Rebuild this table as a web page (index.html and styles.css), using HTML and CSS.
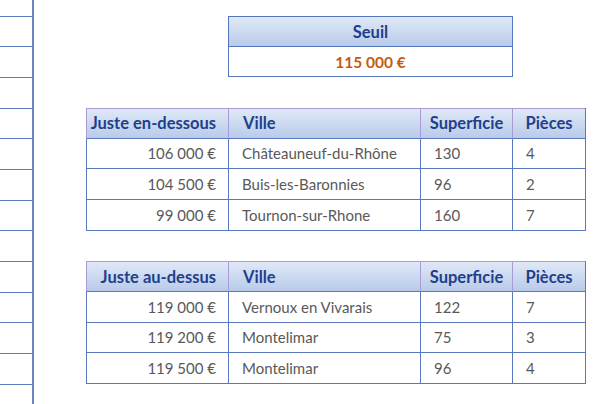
FILE: index.html
```html
<!DOCTYPE html>
<html lang="fr">
<head>
<meta charset="utf-8">
<link rel="stylesheet" href="styles.css">
</head>
<body>
<div class="sheet">
  <div class="gutter">
    <div class="gcell first"></div>
    <div class="gcell"></div><div class="gcell"></div><div class="gcell"></div>
    <div class="gcell"></div><div class="gcell"></div><div class="gcell"></div>
    <div class="gcell"></div><div class="gcell"></div><div class="gcell"></div>
    <div class="gcell"></div><div class="gcell"></div><div class="gcell"></div>
  </div>
  <div class="main">
    <div class="seuil">
      <div class="hd center">Seuil</div>
      <div class="seuil-val">115 000 €</div>
    </div>

    <div class="tbl">
      <div class="hd right">Juste en-dessous</div>
      <div class="hd left">Ville</div>
      <div class="hd center">Superficie</div>
      <div class="hd center">Pièces</div>

      <div class="td right">106 000 €</div>
      <div class="td">Châteauneuf-du-Rhône</div>
      <div class="td">130</div>
      <div class="td">4</div>

      <div class="td right">104 500 €</div>
      <div class="td">Buis-les-Baronnies</div>
      <div class="td">96</div>
      <div class="td">2</div>

      <div class="td right">99 000 €</div>
      <div class="td">Tournon-sur-Rhone</div>
      <div class="td">160</div>
      <div class="td">7</div>
    </div>

    <div class="tbl">
      <div class="hd right">Juste au-dessus</div>
      <div class="hd left">Ville</div>
      <div class="hd center">Superficie</div>
      <div class="hd center">Pièces</div>

      <div class="td right">119 000 €</div>
      <div class="td">Vernoux en Vivarais</div>
      <div class="td">122</div>
      <div class="td">7</div>

      <div class="td right">119 200 €</div>
      <div class="td">Montelimar</div>
      <div class="td">75</div>
      <div class="td">3</div>

      <div class="td right">119 500 €</div>
      <div class="td">Montelimar</div>
      <div class="td">96</div>
      <div class="td">4</div>
    </div>
  </div>
</div>
</body>
</html>
```

FILE: styles.css
```css
* { box-sizing: border-box; }
html, body {
  margin: 0;
  padding: 0;
  background: #ffffff;
  width: 600px;
  height: 404px;
  overflow: hidden;
}
body {
  font-family: Lato, "Liberation Sans", sans-serif;
  font-size: 15px;
  color: #595959;
}
.sheet {
  display: flex;
  height: 404px;
}
.gutter {
  width: 34px;
  border-right: 2px solid #6d86c2;
  display: flex;
  flex-direction: column;
  flex: none;
}
.gcell {
  height: 30.67px;
  border-bottom: 1.5px solid #5b7bc0;
  flex: none;
}
.gcell.first { height: 16.7px; }

.main {
  padding-top: 16px;
  padding-left: 52px;
  display: flex;
  flex-direction: column;
  gap: 30.67px;
}
.seuil {
  margin-left: 142px;
  width: 285px;
  height: 61.33px;
  border: 1px solid #5577bb;
  display: flex;
  flex-direction: column;
}
.seuil .hd {
  border: none;
  border-bottom: 1px solid #5577bb;
  height: 30px;
  flex: none;
}
.seuil-val {
  flex: 1;
  display: flex;
  align-items: center;
  justify-content: center;
  color: #c55a11;
  font-weight: 700;
  font-size: 15.5px;
}
.tbl {
  display: grid;
  grid-template-columns: 142px 192px 92px 73px;
  grid-auto-rows: 30.67px;
  width: 500px;
  border-right: 1px solid #5a78be;
}
.hd {
  display: flex;
  align-items: center;
  white-space: nowrap;
  font-weight: 700;
  font-size: 16.5px;
  color: #1f3f8c;
  background: linear-gradient(#dfe8f6, #b9cbea);
  border-top: 1px solid #a99bd6;
  border-left: 1px solid #a99bd6;
  border-bottom: 1px solid #5a78be;
  padding: 0 12px 0 14px;
}
.hd.center { justify-content: center; padding: 0 2px; }
.hd.right { justify-content: flex-end; padding-left: 2px; }
.td {
  display: flex;
  align-items: center;
  white-space: nowrap;
  border-left: 1px solid #5a78be;
  border-bottom: 1px solid #5a78be;
  padding: 0 12px 0 13px;
}
.td.right { justify-content: flex-end; }
```
